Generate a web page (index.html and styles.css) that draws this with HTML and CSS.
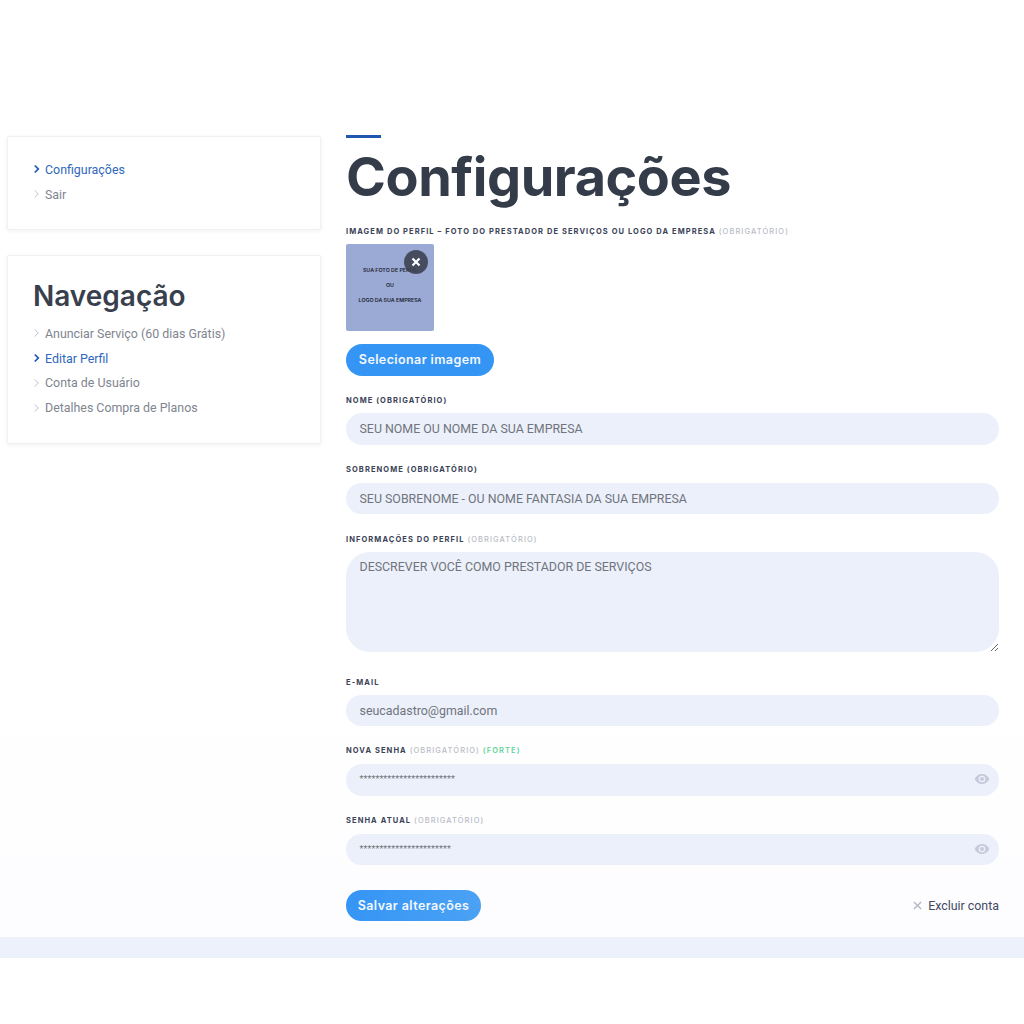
FILE: index.html
```html
<!DOCTYPE html>
<html lang="pt-BR">
<head>
<meta charset="utf-8">
<title>Configurações</title>
<link rel="stylesheet" href="styles.css">
</head>
<body>
<div class="layout">
  <aside class="sidebar">
    <nav class="card card-top">
      <ul class="menu">
        <li class="active"><svg class="chev" viewBox="0 0 8 10"><path d="M2 1l4 4-4 4"/></svg>Configurações</li>
        <li><svg class="chev" viewBox="0 0 8 10"><path d="M2 1l4 4-4 4"/></svg>Sair</li>
      </ul>
    </nav>
    <nav class="card card-nav">
      <h2>Navegação</h2>
      <ul class="menu">
        <li><svg class="chev" viewBox="0 0 8 10"><path d="M2 1l4 4-4 4"/></svg>Anunciar Serviço (60 dias Grátis)</li>
        <li class="active"><svg class="chev" viewBox="0 0 8 10"><path d="M2 1l4 4-4 4"/></svg>Editar Perfil</li>
        <li><svg class="chev" viewBox="0 0 8 10"><path d="M2 1l4 4-4 4"/></svg>Conta de Usuário</li>
        <li><svg class="chev" viewBox="0 0 8 10"><path d="M2 1l4 4-4 4"/></svg>Detalhes Compra de Planos</li>
      </ul>
    </nav>
  </aside>
  <main class="content">
    <div class="rule"></div>
    <h1>Configurações</h1>
    <form class="form">
      <div class="label label-first">Imagem do perfil – foto do prestador de serviços ou logo da empresa <span class="muted">(obrigatório)</span></div>
      <div class="avatar">
        <span>SUA FOTO DE PERFIL</span>
        <span>OU</span>
        <span>LOGO DA SUA EMPRESA</span>
        <div class="remove"><svg viewBox="0 0 10 10"><path d="M1.5 1.5l7 7M8.500 1.500l-7 7"/></svg></div>
      </div>
      <button type="button" class="btn btn-select">Selecionar imagem</button>

      <label class="label label-name">Nome (obrigatório)</label>
      <input class="field" value="SEU NOME OU NOME DA SUA EMPRESA">

      <label class="label">Sobrenome (obrigatório)</label>
      <input class="field" value="SEU SOBRENOME - OU NOME FANTASIA DA SUA EMPRESA">

      <label class="label label-info">Informações do perfil <span class="muted">(obrigatório)</span></label>
      <textarea class="field area">DESCREVER VOCÊ COMO PRESTADOR DE SERVIÇOS</textarea>

      <label class="label label-email">E-mail</label>
      <input class="field" value="seucadastro@gmail.com">

      <label class="label">Nova senha <span class="muted">(obrigatório)</span> <span class="strong">(forte)</span></label>
      <div class="pass">
        <div class="field dots">************************</div>
        <svg class="eye" viewBox="0 0 24 24"><path d="M12 4.500C7 4.500 2.700 7.600 1 12c1.700 4.400 6 7.500 11 7.500s9.300-3.100 11-7.500c-1.700-4.400-6-7.500-11-7.500zm0 12.500a5 5 0 1 1 0-10 5 5 0 0 1 0 10zm0-8a3 3 0 1 0 0 6 3 3 0 0 0 0-6z"/></svg>
      </div>

      <label class="label">Senha atual <span class="muted">(obrigatório)</span></label>
      <div class="pass">
        <div class="field dots">***********************</div>
        <svg class="eye" viewBox="0 0 24 24"><path d="M12 4.500C7 4.500 2.700 7.600 1 12c1.700 4.400 6 7.500 11 7.500s9.300-3.100 11-7.500c-1.700-4.400-6-7.500-11-7.500zm0 12.500a5 5 0 1 1 0-10 5 5 0 0 1 0 10zm0-8a3 3 0 1 0 0 6 3 3 0 0 0 0-6z"/></svg>
      </div>

      <div class="actions">
        <button type="button" class="btn btn-save">Salvar alterações</button>
        <a class="delete"><svg viewBox="0 0 10 10"><path d="M1 1l8 8M9 1l-8 8"/></svg>Excluir conta</a>
      </div>
    </form>
  </main>
</div>
<footer class="band"></footer>
</body>
</html>
```
FILE: styles.css
```css
* { box-sizing: border-box; }
html, body { margin: 0; background: #fff; }
body { font-family: Roboto, "Liberation Sans", sans-serif; color: #333c4e; }

.layout {
  display: flex;
  gap: 25px;
  padding: 135px 25px 0 7px;
  height: 937px;
  background: linear-gradient(#fff 70%, #fdfdff);
}
.sidebar { width: 314px; flex: none; padding-top: 1px; display: flex; flex-direction: column; gap: 25px; }
.card {
  background: #fff;
  border: 1px solid #f0f1f4;
  border-radius: 2px;
  box-shadow: 0 1px 4px rgba(40, 60, 100, .07);
  padding: 20px 25px 0;
}
.card-top { height: 94px; }
.card-nav { height: 189px; padding-top: 22px; }
.card h2 {
  font: 600 28px/36px Inter, sans-serif;
  margin: 0 0 7px;
  color: #39404d;
}
.menu { list-style: none; margin: 0; padding: 0; }
.menu li {
  display: flex;
  align-items: center;
  height: 24.800px;
  font-size: 12.400px;
  color: #80858f;
  gap: 5px;
}
.menu li.active { color: #2f68bd; }
.chev { width: 7px; height: 10px; flex: none; fill: none; stroke: #b9bec9; stroke-width: 1.100; }
.active .chev { stroke: #1f57b0; stroke-width: 2; }

.content { flex: 1; min-width: 0; }
.rule { width: 35px; height: 3px; background: #1f57b0; }
h1 {
  font: 700 54px/64px Inter, sans-serif;
  letter-spacing: -.45px;
  margin: 7px 0 0;
  color: #343b49;
}
.form { display: flex; flex-direction: column; align-items: stretch; }
.label {
  display: block;
  font: 700 7.500px/10px Inter, sans-serif;
  letter-spacing: 1.080px;
  text-transform: uppercase;
  color: #3a4258;
  margin: 20px 0 8px;
}
.label-first { margin: 18px 0 7px; }
.label-name { margin: 20px 0 7px; }
.label-info { margin: 20.500px 0 7.500px; }
.label-email { margin: 26px 0 7px; }
.muted { color: #b9bcc5; font-weight: 500; }
.strong { color: #5fd39a; font-weight: 600; }

.avatar {
  position: relative;
  width: 88px;
  height: 87px;
  border-radius: 2px;
  background: #9aaad4;
  display: flex;
  flex-direction: column;
  align-items: center;
  padding-top: 22px;
  gap: 7px;
  font: 600 5.300px/8px Inter, sans-serif;
  color: #1f2433;
}
.remove {
  position: absolute;
  top: 6px;
  right: 6px;
  width: 24px;
  height: 24px;
  border-radius: 50%;
  background: rgba(60, 65, 80, .9);
  display: flex;
  align-items: center;
  justify-content: center;
}
.remove svg { width: 10px; height: 10px; fill: none; stroke: #fff; stroke-width: 2.200; }

.btn {
  align-self: flex-start;
  height: 32px;
  border: 0;
  border-radius: 16px;
  padding: 0;
  background: #3595f5;
  color: #f4f8ff;
  font: 600 12.500px/32px Inter, sans-serif;
  letter-spacing: .4px;
}
.btn-select { margin-top: 13px; width: 148px; }
.btn-save { width: 135px; height: 31.500px; background: linear-gradient(90deg, #3595f5, #4ba2f4); }

.field {
  display: block;
  width: 100%;
  height: 31.500px;
  border: 0;
  outline: 0;
  border-radius: 16px;
  background: #ecf0fb;
  padding: 0 13.500px;
  font: 400 12.400px/31.500px Roboto, sans-serif;
  color: #70747c;
}
.area {
  height: 99.500px;
  border-radius: 24px;
  padding: 7px 13.500px;
  line-height: 15px;
  resize: vertical;
}
.pass { position: relative; }
.dots { font-size: 9px; letter-spacing: .1px; color: #70747c; }
.eye {
  position: absolute;
  right: 9px;
  top: 7px;
  width: 16px;
  height: 16px;
  fill: #c5cbdb;
  fill-rule: evenodd;
}
.actions {
  display: flex;
  justify-content: space-between;
  align-items: center;
  margin-top: 24.500px;
}
.delete {
  display: flex;
  align-items: center;
  gap: 6px;
  font-size: 12.400px;
  color: #414a60;
}
.delete svg { width: 9px; height: 9px; fill: none; stroke: #b4b9c6; stroke-width: 1.600; }

.band { height: 21px; background: #edf1fb; }
```
